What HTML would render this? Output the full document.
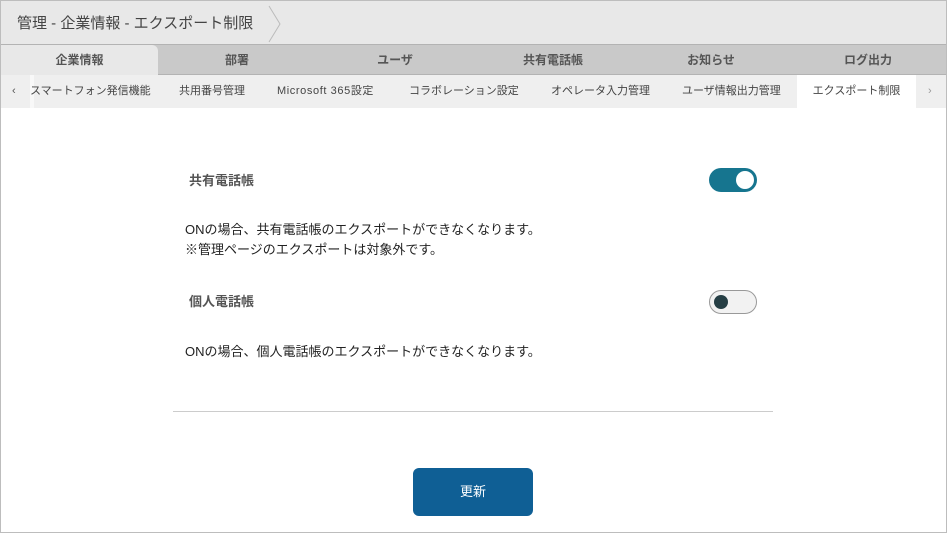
<!DOCTYPE html>
<html><head><meta charset="utf-8"><style>
*{margin:0;padding:0;box-sizing:border-box}
body{width:947px;height:533px;background:#fff;font-family:"Liberation Sans","Noto Sans CJK JP",sans-serif;position:relative;overflow:hidden}
.frame{position:absolute;left:0;top:0;width:947px;height:533px;border:1px solid #bdbdbd}
.hdr{position:absolute;left:1px;top:1px;width:945px;height:44px;background:#e8e8e8}
.hdr .t{position:absolute;left:16px;top:11px;font-size:15px;color:#444}
.tabs{position:absolute;left:1px;top:44px;width:945px;height:31px;background:#c9c9c9;border-top:1px solid #b3b3b3;border-bottom:1px solid #b3b3b3}
.tab{position:absolute;top:0;height:30px;line-height:30px;text-align:center;font-size:12px;font-weight:bold;color:#555}
.tab.a{background:#e8e8e8;height:31px;border-top-right-radius:6px}
.sub{position:absolute;left:1px;top:75px;width:945px;height:33px;background:#efefef}
.s{position:absolute;top:0;height:33px;line-height:33px;font-size:11px;color:#444;white-space:nowrap}
.lbl{position:absolute;font-size:13px;font-weight:bold;color:#555}
.p{position:absolute;font-size:13px;color:#222;line-height:20px}
.tg{position:absolute;width:48px;height:24px;border-radius:12px}
</style></head><body>
<div class="hdr"><div class="t">管理 - 企業情報 - エクスポート制限</div>
<svg style="position:absolute;left:266px;top:4px" width="16" height="38"><path d="M2 1 L13 19 L2 37" fill="none" stroke="#bbb" stroke-width="1"/></svg></div>
<div class="tabs">
<div class="tab a" style="left:0;width:157px">企業情報</div>
<div class="tab" style="left:157px;width:158px">部署</div>
<div class="tab" style="left:315px;width:158px">ユーザ</div>
<div class="tab" style="left:473px;width:158px">共有電話帳</div>
<div class="tab" style="left:631px;width:158px">お知らせ</div>
<div class="tab" style="left:789px;width:156px">ログ出力</div>
</div>
<div class="sub">
<div class="s" style="left:11px;color:#555">‹</div>
<div style="position:absolute;left:29px;top:0;width:4px;height:33px;background:#f8f8f8"></div>
<div class="s" style="left:29px">スマートフォン発信機能</div>
<div class="s" style="left:178px">共用番号管理</div>
<div class="s" style="left:276px;letter-spacing:0.6px">Microsoft 365設定</div>
<div class="s" style="left:408px">コラボレーション設定</div>
<div class="s" style="left:550px">オペレータ入力管理</div>
<div class="s" style="left:681px">ユーザ情報出力管理</div>
<div class="s" style="left:796px;width:119px;background:#fff;text-align:center">エクスポート制限</div>
<div class="s" style="left:927px;color:#999">›</div>
</div>
<div class="lbl" style="left:189px;top:170px">共有電話帳</div>
<div class="tg" style="left:709px;top:168px;background:#16758f"><div style="position:absolute;right:3px;top:3px;width:18px;height:18px;border-radius:50%;background:#fff"></div></div>
<div class="p" style="left:185px;top:220px">ONの場合、共有電話帳のエクスポートができなくなります。<br>※管理ページのエクスポートは対象外です。</div>
<div class="lbl" style="left:189px;top:291px">個人電話帳</div>
<div class="tg" style="left:709px;top:290px;background:#f2f2f2;border:1px solid #999"><div style="position:absolute;left:4px;top:4px;width:14px;height:14px;border-radius:50%;background:#263f45"></div></div>
<div class="p" style="left:185px;top:342px">ONの場合、個人電話帳のエクスポートができなくなります。</div>
<div style="position:absolute;left:173px;top:411px;width:600px;height:1px;background:#ccc"></div>
<div style="position:absolute;left:413px;top:468px;width:120px;height:48px;border-radius:6px;background:#0f5f95;color:#fff;font-size:13px;text-align:center;line-height:48px">更新</div>
<div class="frame"></div>
</body></html>
